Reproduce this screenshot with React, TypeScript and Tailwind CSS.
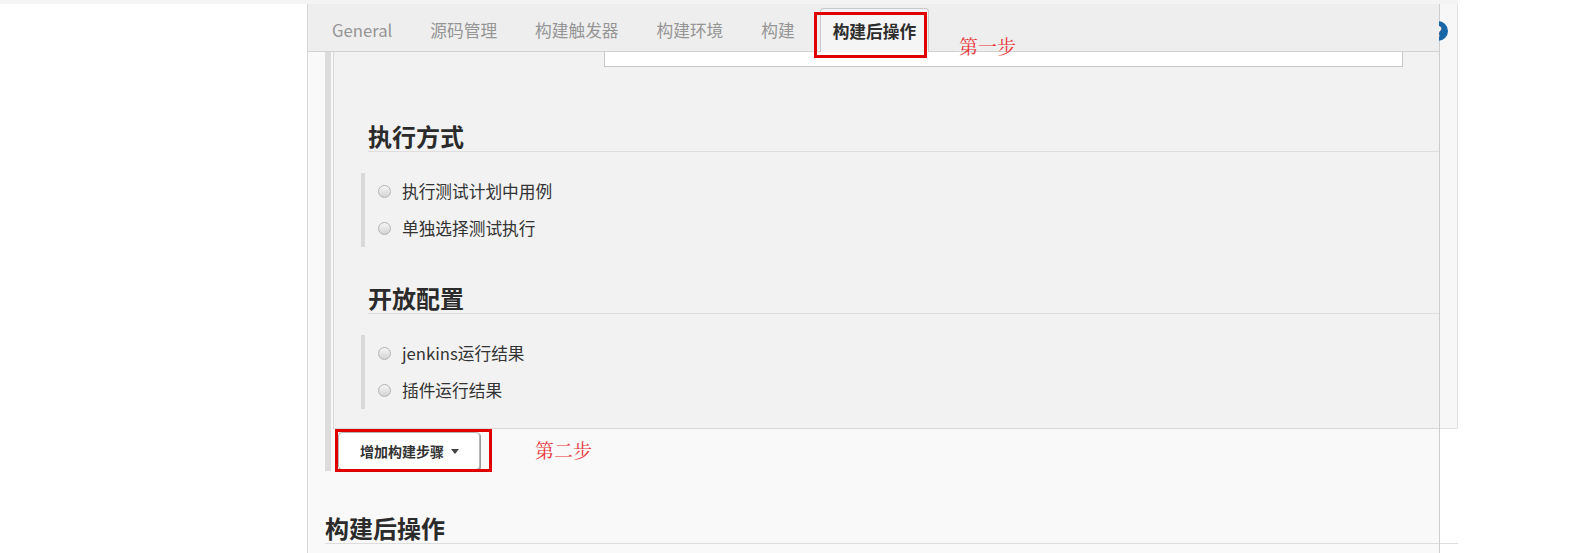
import React from "react";

function Radio({ label }: { label: string }) {
  return (
    <div className="flex h-[37px] items-center">
      <span className="h-[13px] w-[13px] shrink-0 rounded-full border border-[#b3b3b3] bg-linear-to-b from-[#f6f6f6] to-[#d4d4d4]" />
      <span className="ml-[11px] text-[16.7px] leading-none text-[#333]">{label}</span>
    </div>
  );
}

function Heading({ text, className }: { text: string; className: string }) {
  return (
    <div className={"h-[32px] border-b border-[#dedede] text-[24px] font-bold leading-[31px] text-[#2b2b2b] " + className}>
      {text}
    </div>
  );
}

export default function App() {
  const tabs = ["源码管理", "构建触发器", "构建环境", "构建"];
  return (
    <div className="relative h-[553px] w-[1595px] overflow-hidden bg-white font-['Noto_Sans_CJK_SC',sans-serif] text-[#333]">
      <div className="h-[4px] w-[1458px] bg-[#f4f4f4]" />
      <div className="flex">
        <div className="w-[307px] shrink-0" />
        <div className="h-[549px] w-[1132px] shrink-0 border-l border-[#d6d6d6] bg-[#f9f9f9]">
          {/* tab bar */}
          <div className="relative z-30 flex h-[48px] w-[1131px] items-end gap-[38px] border-b border-[#d2d2d2] bg-[#eeeeee] pl-[24px]">
            <div className="flex h-[44px] items-center pt-[3px] text-[16.7px] text-[#959595]">General</div>
            {tabs.map((t) => (
              <div key={t} className="flex h-[44px] items-center pt-[3px] text-[16.7px] text-[#959595]">
                {t}
              </div>
            ))}
            <div className="-mb-px ml-[-13px] flex h-[44px] items-center rounded-t-[4px] border border-b-0 border-[#c9c9c9] bg-[#f5f5f5] px-[12px] pt-[3px] text-[16.7px] font-bold text-[#2e2e2e]">
              构建后操作
            </div>
          </div>

          {/* body */}
          <div className="flex">
            <div className="ml-[17px] h-[419px] w-[6px] shrink-0 bg-[#dcdcdc]" />
            <div className="ml-[2px] flex shrink-0 flex-col">
              <div className="w-[1125px] border-b border-l border-[#d8d8d8] bg-[#f2f2f2] pb-[19px]">
                <div className="ml-[270px] h-[15px] w-[799px] border-x border-b border-[#c8c8c8] bg-white" />
                <Heading text="执行方式" className="ml-[34px] mr-[15px] mt-[53px]" />
                <div className="ml-[27px] mt-[21px] border-l-4 border-[#d9d9d9] pl-[13px]">
                  <Radio label="执行测试计划中用例" />
                  <Radio label="单独选择测试执行" />
                </div>
                <Heading text="开放配置" className="ml-[34px] mr-[15px] mt-[35px]" />
                <div className="ml-[27px] mt-[21px] border-l-4 border-[#d9d9d9] pl-[13px]">
                  <Radio label="jenkins运行结果" />
                  <Radio label="插件运行结果" />
                </div>
              </div>
              <div className="pl-[5px] pt-[3px]">
                <button className="flex h-[38px] w-[142px] items-center justify-center gap-[7px] rounded-[4px] border border-[#b5b5b5] bg-white pl-[1px] text-[14px] font-bold text-[#333] shadow-[1px_1px_0_#9a9a9a]">
                  增加构建步骤
                  <span className="h-0 w-0 border-x-[4px] border-t-[5px] border-x-transparent border-t-[#444]" />
                </button>
              </div>
            </div>
          </div>

          <Heading text="构建后操作" className="ml-[17px] mt-[41px] w-[1133px]" />
        </div>
      </div>

      {/* right overflow strip and border line */}
      <div className="absolute left-[1439px] top-[4px] z-10 h-[425px] w-[19px] border-b border-r border-[#e2e2e2] bg-[#f7f7f7]" />
      <div className="absolute left-[1439px] top-[4px] z-10 h-[549px] w-px bg-[#cdcdcd]" />
      {/* help icon, partly hidden behind the tab bar */}
      <div className="absolute left-[1428px] top-[21px] z-20 flex h-[20px] w-[20px] items-center justify-center rounded-full bg-[#1767a6] text-[14px] font-bold leading-none text-white">
        ?
      </div>

      {/* annotations */}
      <div className="absolute left-[814px] top-[12px] z-40 h-[46px] w-[113px] border-[3px] border-[#e00000]" />
      <div className="absolute left-[959px] top-[36px] z-40 font-['Noto_Serif_CJK_SC','Noto_Sans_CJK_SC',serif] text-[19px] leading-none text-[#e8353a]">
        第一步
      </div>
      <div className="absolute left-[335px] top-[429px] z-40 h-[43px] w-[157px] border-[3px] border-[#e00000]" />
      <div className="absolute left-[535px] top-[440px] z-40 font-['Noto_Serif_CJK_SC','Noto_Sans_CJK_SC',serif] text-[19px] leading-none text-[#e8353a]">
        第二步
      </div>
    </div>
  );
}
